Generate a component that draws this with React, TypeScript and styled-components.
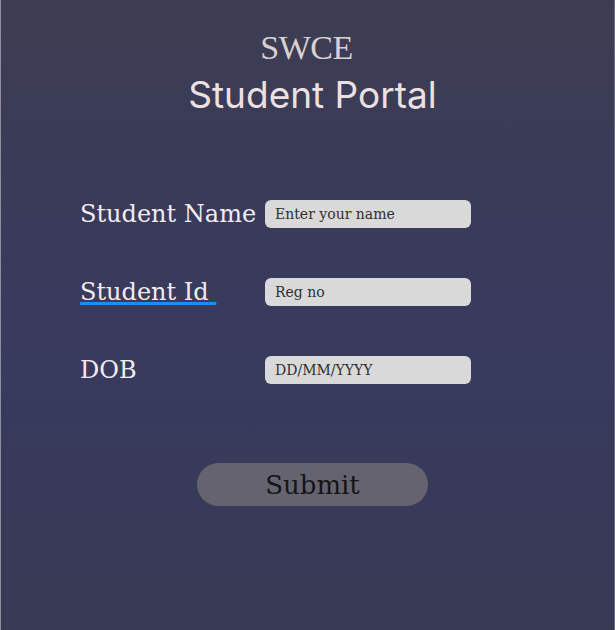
import React from "react";
import styled, { createGlobalStyle } from "styled-components";

const Global = createGlobalStyle`
  html, body { margin: 0; padding: 0; }
  body { width: 615px; height: 630px; overflow: hidden; }
`;

const Page = styled.div`
  box-sizing: border-box;
  width: 615px;
  height: 630px;
  border-left: 1px solid #8e8e9c;
  border-right: 1px solid #6a6a80;
  background: linear-gradient(180deg, #3d3d52 0%, #393a5c 45%, #383a5e 60%, #393a54 100%);
  display: flex;
  flex-direction: column;
`;

const Header = styled.header`
  display: flex;
  flex-direction: column;
  align-items: center;
  padding-top: 28px;
`;

const Logo = styled.div`
  font-family: "Liberation Serif", serif;
  font-size: 34px;
  line-height: 40px;
  letter-spacing: -0.5px;
  color: #d9d0d2;
  font-weight: 400;
  margin-left: -2px;
`;

const Title = styled.h1`
  margin: 5px 0 0 10px;
  font-family: Inter, "Noto Sans", sans-serif;
  font-weight: 400;
  font-size: 37px;
  line-height: 44px;
  color: #ece0e2;
`;

const Form = styled.form`
  display: grid;
  grid-template-columns: 185px 206px;
  grid-auto-rows: 28px;
  row-gap: 50px;
  align-items: center;
  padding-left: 79px;
  margin-top: 83px;
`;

const Label = styled.label<{ $marked?: boolean }>`
  font-family: "DejaVu Serif", serif;
  font-size: 24px;
  color: #f1ecf2;
  white-space: nowrap;
  text-decoration: ${(p) => (p.$marked ? "underline" : "none")};
  text-decoration-color: #1b8ef2;
  text-decoration-thickness: 3px;
  text-underline-offset: 2px;
`;

const Input = styled.input`
  box-sizing: border-box;
  width: 206px;
  height: 28px;
  border: none;
  border-radius: 6px;
  background: #d9d9d9;
  padding: 0 10px;
  font-family: "DejaVu Serif", serif;
  font-size: 14px;
  color: #2a2a2a;
  outline: none;
  &::placeholder { color: #303030; }
`;

const ButtonRow = styled.div`
  display: flex;
  padding-left: 196px;
  margin-top: 79px;
`;

const SubmitButton = styled.button`
  width: 231px;
  height: 43px;
  border: none;
  border-radius: 22px;
  background: #65636f;
  font-family: "DejaVu Serif", serif;
  font-size: 26px;
  color: #151515;
  cursor: pointer;
  padding: 0;
`;

export default function App() {
  return (
    <>
      <Global />
      <Page>
        <Header>
          <Logo>SWCE</Logo>
          <Title>Student Portal</Title>
        </Header>
        <Form onSubmit={(e) => e.preventDefault()}>
          <Label>Student Name</Label>
          <Input placeholder="Enter your name" />
          <Label $marked>Student Id{"\u00a0"}</Label>
          <Input placeholder="Reg no" />
          <Label>DOB</Label>
          <Input placeholder="DD/MM/YYYY" />
        </Form>
        <ButtonRow>
          <SubmitButton type="submit">Submit</SubmitButton>
        </ButtonRow>
      </Page>
    </>
  );
}
